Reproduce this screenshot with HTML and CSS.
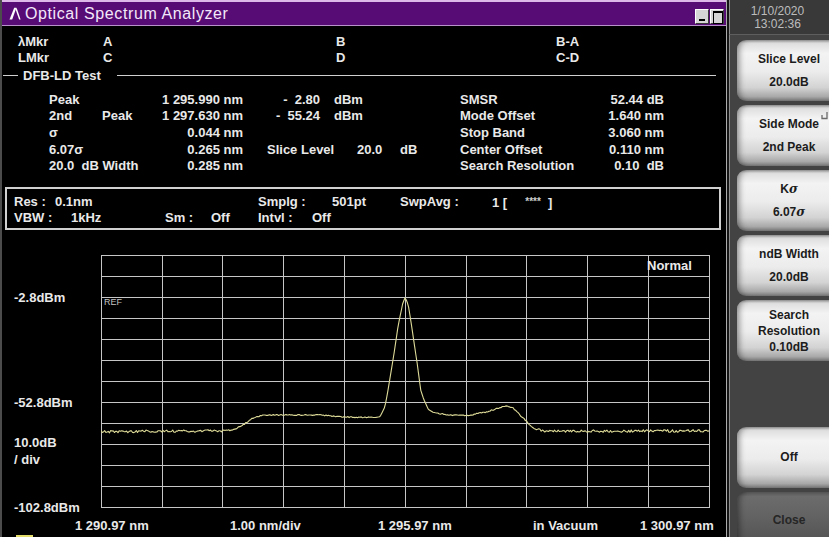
FILE: index.html
```html
<!DOCTYPE html>
<html>
<head>
<meta charset="utf-8">
<title>Optical Spectrum Analyzer</title>
<link rel="stylesheet" href="styles.css">
</head>
<body>
<div class="app">
  <div class="win">
    <div class="titlebar">
      <svg class="logo" width="12" height="13" viewBox="0 0 12 13">
        <polygon points="0.5,12.5 5.2,0.8 7.4,0.8 3.2,12.5" fill="#ffffff"/>
        <polygon points="6.6,2.6 7.6,0.8 11.6,12.5 10.1,12.5" fill="#ffffff"/>
      </svg>
      <span class="title">Optical Spectrum Analyzer</span>
      <div class="wbtns"><span class="wb wb-min"></span><span class="wb wb-max"></span></div>
    </div>

    <div class="markers">
      <span>λMkr</span><span>A</span><span>B</span><span>B-A</span>
      <span>LMkr</span><span>C</span><span>D</span><span>C-D</span>
    </div>

    <div class="legend"><span>DFB-LD Test</span></div>

    <div class="data">
      <span>Peak</span><span></span><span class="r">1 295.990 nm</span><span class="r pr">-&nbsp;&nbsp;2.80</span><span>dBm</span><span>SMSR</span><span class="r">52.44 dB</span>
      <span>2nd</span><span>Peak</span><span class="r">1 297.630 nm</span><span class="r pr">-&nbsp;&nbsp;55.24</span><span>dBm</span><span>Mode Offset</span><span class="r">1.640 nm</span>
      <span>σ</span><span></span><span class="r">0.044 nm</span><span></span><span></span><span>Stop Band</span><span class="r">3.060 nm</span>
      <span>6.07σ</span><span></span><span class="r">0.265 nm</span><span class="span2 slice"><span class="sl">Slice Level</span><span class="sv">20.0</span><span>dB</span></span><span>Center Offset</span><span class="r">0.110 nm</span>
      <span class="span2">20.0&nbsp; dB Width</span><span class="r">0.285 nm</span><span></span><span></span><span>Search Resolution</span><span class="r">0.10&nbsp;&nbsp;dB</span>
    </div>

    <div class="res">
      <span>Res :</span><span>0.1nm</span><span></span><span></span><span>Smplg :</span><span class="pl20">501pt</span><span>SwpAvg :</span><span>1 [&nbsp;&nbsp;&nbsp;&nbsp;&nbsp;<span class="ast">****</span>&nbsp;&nbsp;]</span>
      <span>VBW :</span><span class="pl16">1kHz</span><span>Sm :</span><span>Off</span><span>Intvl :</span><span>Off</span><span></span><span></span>
    </div>

    <div class="chart">
      <div class="yaxis">
        <span class="yl row3">-2.8dBm</span>
        <span class="yl row8">-52.8dBm</span>
        <span class="yl ydiv">10.0dB<br>/ div</span>
        <span class="yl row13">-102.8dBm</span>
      </div>
      <div class="plot">
        <svg class="grid" width="609" height="253" viewBox="0 0 609 253">
          <g stroke="#c6c6c6" stroke-width="1" shape-rendering="crispEdges" fill="none">
            <path d="M0.5 0V253M61.5 0V253M121.5 0V253M182.5 0V253M243.5 0V253M304.5 0V253M365.5 0V253M425.5 0V253M486.5 0V253M547.5 0V253M608.5 0V253"/>
            <path d="M0 0.5H609M0 21.5H609M0 42.5H609M0 63.5H609M0 84.5H609M0 105.5H609M0 126.5H609M0 147.5H609M0 168.5H609M0 189.5H609M0 210.5H609M0 231.5H609M0 252.5H609"/>
          </g>
          <polyline id="trace" fill="none" stroke="#dedb98" stroke-width="1.1" stroke-linejoin="round"
            points="0,176.7 121,175.7 132,175 142,170 152,163 162,160 219,160 244,162 274,162.5 279,161.7 284,151.7 287,135 292,105 297,71.7 301.7,48.3 304.3,42.3 307.3,50 310.7,71.7 315.7,105 319.7,135 323,145 327.3,154.3 332,157.3 346,160 366,160.7 386,156.7 404,151 412,153 419,160 426,166.7 432,173.3 442,176 608,176"/>
        </svg>
        <span class="ref">REF</span>
        <span class="normal">Normal</span>
      </div>
    </div>

    <div class="xaxis">
      <span class="x1">1 290.97 nm</span>
      <span class="x2">1.00 nm/div</span>
      <span class="x3">1 295.97 nm</span>
      <span class="x4">in Vacuum</span>
      <span>1 300.97 nm</span>
    </div>
    <div class="msq"></div>
  </div>

  <aside class="side">
    <div class="clock"><div>1/10/2020</div><div>13:02:36</div></div>
    <div class="keys">
      <div class="key"><div>Slice Level</div><div>20.0dB</div></div>
      <div class="key">
        <div>Side Mode</div><div>2nd Peak</div>
        <svg class="hook" width="7" height="9" viewBox="0 0 7 9"><path d="M1 4V7.5H6V1" fill="none" stroke="#6a6a6a" stroke-width="1.3"/></svg>
      </div>
      <div class="key"><div>K<i>σ</i></div><div>6.07<i>σ</i></div></div>
      <div class="key"><div>ndB Width</div><div>20.0dB</div></div>
      <div class="key tight"><div>Search</div><div>Resolution</div><div>0.10dB</div></div>
      <div class="spacer"></div>
      <div class="key"><div>Off</div></div>
      <div class="key dark"><div>Close</div></div>
    </div>
  </aside>
</div>
<script src="script.js"></script>
</body>
</html>
```

FILE: styles.css
```css
* { box-sizing: border-box; }
html, body { margin: 0; padding: 0; }
body {
  width: 829px;
  height: 537px;
  overflow: hidden;
  background: #000;
  font-family: "Liberation Sans", Arial, sans-serif;
  color: #e9e9e9;
}
.app { display: flex; width: 829px; height: 537px; }

.win {
  width: 727px;
  flex: none;
  display: flex;
  flex-direction: column;
  background: #000;
  border-left: 2px solid #4c4c4c;
  border-right: 1px solid #ababab;
  overflow: hidden;
}

.titlebar {
  height: 26px;
  flex: none;
  display: flex;
  align-items: center;
  background: #570c75;
  border-top: 2px solid #dcb9e8;
  border-bottom: 1px solid #b891ca;
  padding-left: 7px;
}
.logo { display: block; flex: none; }
.title {
  font-size: 16px;
  letter-spacing: 0.6px;
  color: #f3e8fa;
  margin-left: 4px;
}
.wbtns {
  margin-left: auto;
  margin-right: 2px;
  align-self: flex-end;
  margin-bottom: 1px;
  display: flex;
  gap: 1px;
}
.wb {
  position: relative;
  width: 14px;
  height: 15px;
  background: #d6d6d6;
  border: 1px solid;
  border-color: #ffffff #3a3a3a #3a3a3a #ffffff;
}
.wb-min::after {
  content: "";
  position: absolute;
  left: 3px;
  bottom: 2px;
  width: 6px;
  height: 2px;
  background: #000;
}
.wb-max::after {
  content: "";
  position: absolute;
  left: 2px;
  top: 1px;
  width: 8px;
  height: 10px;
  border: 1px solid #000;
  border-top-width: 2px;
}

.markers {
  display: grid;
  grid-template-columns: 85px 233px 220px auto;
  padding: 8px 0 0 16px;
  font-size: 13px;
  font-weight: bold;
  line-height: 16px;
}

.legend {
  display: flex;
  align-items: center;
  height: 16px;
  margin-top: 2px;
  font-size: 13px;
  font-weight: bold;
}
.legend::before {
  content: "";
  width: 15px;
  height: 1px;
  margin-left: 1px;
  background: #d0d0d0;
}
.legend span { padding: 0 16px 0 5px; }
.legend::after {
  content: "";
  flex: 1;
  height: 1px;
  margin-right: 10px;
  background: #d0d0d0;
}

.data {
  display: grid;
  grid-template-columns: 53px 60px 81px 91px 126px 130px 74px;
  padding-left: 47px;
  margin-top: 8.6px;
  font-size: 13px;
  font-weight: bold;
  line-height: 16.7px;
  white-space: nowrap;
}
.r { text-align: right; }
.pr { padding-right: 14px; }
.span2 { grid-column: span 2; }
.slice { padding-left: 24px; }
.sl { display: inline-block; width: 90px; }
.sv { display: inline-block; width: 43px; }

.res {
  display: grid;
  grid-template-columns: 41px 110px 46px 47px 54px 88px 92px auto;
  margin: 12px 5px 0 3px;
  padding: 4.5px 0 3.5px 7px;
  border: 2px solid #d0d0d0;
  font-size: 13px;
  font-weight: bold;
  line-height: 15px;
  white-space: nowrap;
}
.pl20 { padding-left: 20px; }
.pl16 { padding-left: 16px; }
.ast { font-size: 10px; color: #cfcfcf; vertical-align: 2px; }

.chart {
  display: flex;
  height: 273px;
  margin-top: 15px;
  flex: none;
}
.yaxis {
  width: 99px;
  flex: none;
  display: grid;
  grid-template-rows: repeat(13, 21px);
  padding-left: 12px;
  font-size: 13px;
  font-weight: bold;
  line-height: 21px;
  white-space: nowrap;
}
.row3 { grid-row: 3; }
.row8 { grid-row: 8; }
.row13 { grid-row: 13; }
.ydiv { grid-row: 10 / span 2; line-height: 17px; align-self: start; }

.plot {
  position: relative;
  width: 609px;
  height: 253px;
  margin-top: 10px;
  flex: none;
}
.grid { display: block; }
.ref {
  position: absolute;
  left: 3px;
  top: 42px;
  font-size: 9px;
  line-height: 10px;
  color: #c4c4c4;
}
.normal {
  position: absolute;
  left: 546px;
  top: 3px;
  font-size: 13px;
  font-weight: bold;
  line-height: 16px;
}

.xaxis {
  display: flex;
  padding-left: 73px;
  font-size: 13px;
  font-weight: bold;
  line-height: 16px;
  white-space: nowrap;
  flex: none;
}
.x1 { width: 155px; }
.x2 { width: 148px; }
.x3 { width: 155px; }
.x4 { width: 107px; }
.msq {
  width: 17px;
  height: 6px;
  margin: 1px 0 0 14px;
  background: #e4dc6a;
  flex: none;
}

.side {
  width: 102px;
  flex: none;
  display: flex;
  flex-direction: column;
  border-left: 2px solid #161616;
  overflow: hidden;
}
.clock {
  height: 35px;
  flex: none;
  padding: 4.5px 4px 0 0;
  text-align: center;
  font-size: 12px;
  line-height: 13px;
  color: #bdbdbd;
  background: #393939;
  border-left: 1px solid #8e8e8e;
  border-bottom: 1px solid #5e5e5e;
}
.keys {
  flex: 1;
  display: flex;
  flex-direction: column;
  gap: 4px;
  padding: 5px 0 0 7px;
  background: #434343;
  border-left: 1px solid #8e8e8e;
}
.key {
  position: relative;
  flex: none;
  width: 104px;
  height: 61px;
  border-radius: 9px 0 0 9px;
  background: linear-gradient(to bottom, #9a9a9a 0%, #dedede 5%, #f3f3f3 22%, #ececec 52%, #d3d3d3 78%, #a8a8a8 93%, #7a7a7a 100%);
  box-shadow: inset 5px 0 6px -3px rgba(0, 0, 0, 0.45);
  display: flex;
  flex-direction: column;
  align-items: center;
  justify-content: center;
  font-size: 12px;
  font-weight: bold;
  line-height: 23px;
  color: #1c1c1c;
  white-space: nowrap;
}
.key i { font-family: "DejaVu Serif", "Liberation Serif", serif; font-size: 12px; }
.key.tight { line-height: 16px; }
.key.dark {
  height: 56px;
  background: linear-gradient(to bottom, #5a5a5a 0%, #6c6c6c 8%, #626262 45%, #4f4f4f 100%);
  color: #262626;
}
.spacer { flex: none; height: 58px; }
.hook { position: absolute; left: 84px; top: 6px; }
```

FILE: script.js
```js
(function () {
  var P = [[0,176.7],[121,175.7],[132,175],[142,170],[152,163],[162,160],[219,160],[244,162],[274,162.5],[279,161.7],[284,151.7],[287,135],[292,105],[297,71.7],[301.7,48.3],[304.3,42.3],[307.3,50],[310.7,71.7],[315.7,105],[319.7,135],[323,145],[327.3,154.3],[332,157.3],[346,160],[366,160.7],[386,156.7],[404,151],[412,153],[419,160],[426,166.7],[432,173.3],[442,176],[608,176]];
  function base(x) {
    for (var i = 1; i < P.length; i++) {
      if (x <= P[i][0]) {
        var a = P[i - 1], b = P[i];
        var t = (x - a[0]) / (b[0] - a[0]);
        return a[1] + (b[1] - a[1]) * t;
      }
    }
    return P[P.length - 1][1];
  }
  var s = 20200110;
  function rnd() { s = (s * 16807) % 2147483647; return s / 2147483647; }
  var out = [];
  for (var i = 0; i <= 500; i++) {
    var x = i * 608 / 500;
    var amp = (x < 124 || x > 437) ? 1.3 : ((x > 272 && x < 336) ? 0 : 0.55);
    var y = base(x) + (rnd() - 0.5) * 2 * amp;
    out.push(x.toFixed(1) + "," + y.toFixed(1));
  }
  document.getElementById("trace").setAttribute("points", out.join(" "));
})();
```
